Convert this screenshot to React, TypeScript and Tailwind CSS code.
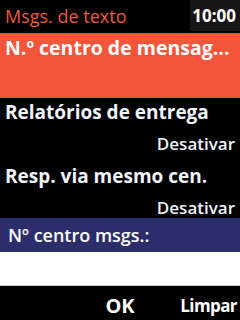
export default function App() {
  const font = { fontFamily: '"Open Sans", "DejaVu Sans", sans-serif' };

  return (
    <div className="w-[240px] h-[320px] bg-black text-[#f2f6ff] overflow-hidden flex flex-col" style={font}>
      {/* Status / title bar */}
      <div className="h-[33px] flex items-start justify-between">
        <div className="pl-[5px] leading-[32px] text-[18px] font-medium text-[#ec5b3b] whitespace-nowrap">Msgs. de texto</div>
        <div className="w-[50px] h-[31px] bg-[#161616] leading-[31px] text-right pr-[4px] text-[17px] font-bold text-white">
          10:00
        </div>
      </div>

      {/* Selected item */}
      <div className="h-[65px] bg-[#f2553a]">
        <div className="pl-[5px] leading-[30px] text-[19.5px] font-bold text-white whitespace-nowrap">
          N.º centro de mensag...
        </div>
      </div>

      {/* Settings list */}
      <div className="flex flex-col text-[19px] font-bold">
        <div className="mt-[2px] h-[24px] leading-[24px] pl-[5px] whitespace-nowrap">Relatórios de entrega</div>
        <div className="mt-[8px] h-[24px] leading-[24px] pr-[5px] text-right text-[17px] font-semibold">Desativar</div>
        <div className="mt-[8px] h-[24px] leading-[24px] pl-[5px] whitespace-nowrap">Resp. via mesmo cen.</div>
        <div className="mt-[8px] h-[22px] leading-[24px] pr-[5px] text-right text-[17px] font-semibold">Desativar</div>
      </div>

      {/* Input field */}
      <div className="h-[34px] bg-[#2b2e6a] leading-[34px] pl-[8px] text-[18px] font-semibold text-white whitespace-nowrap">
        Nº centro msgs.:
      </div>
      <div className="h-[34px] bg-white border-b border-[#c8ccd4]" />

      {/* Softkeys */}
      <div className="h-[34px] pt-[6px] grid grid-cols-3 text-white font-bold">
        <div />
        <div className="text-center leading-[28px] text-[20px]">OK</div>
        <div className="text-right pr-[3px] leading-[28px] text-[17px] tracking-[-0.6px]">Limpar</div>
      </div>
    </div>
  );
}
